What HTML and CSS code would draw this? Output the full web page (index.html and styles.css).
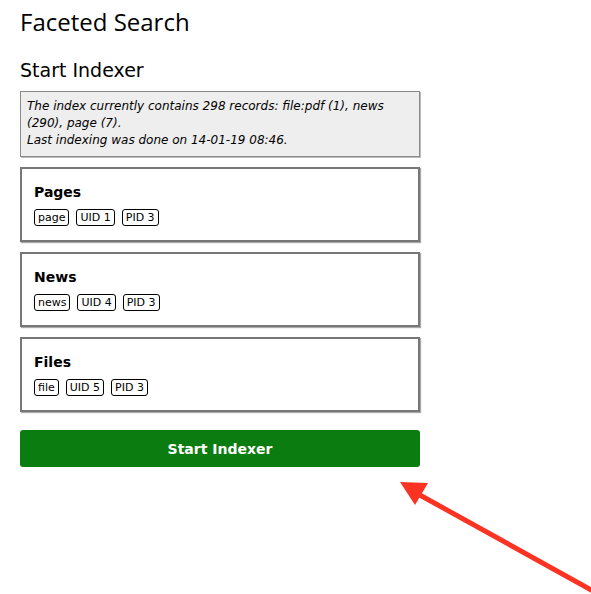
FILE: index.html
```html
<!DOCTYPE html>
<html>
<head>
<meta charset="utf-8">
<link rel="stylesheet" href="styles.css">
</head>
<body>
<div class="page">
  <h1 class="title">Faceted Search</h1>
  <h2 class="subtitle">Start Indexer</h2>
  <div class="info">
    <em>The index currently contains 298 records: file:pdf (1), news (290), page (7).<br>Last indexing was done on 14-01-19 08:46.</em>
  </div>
  <div class="card">
    <div class="card-title">Pages</div>
    <div class="tags"><span class="tag">page</span><span class="tag">UID 1</span><span class="tag">PID 3</span></div>
  </div>
  <div class="card">
    <div class="card-title">News</div>
    <div class="tags"><span class="tag">news</span><span class="tag">UID 4</span><span class="tag">PID 3</span></div>
  </div>
  <div class="card">
    <div class="card-title">Files</div>
    <div class="tags"><span class="tag">file</span><span class="tag">UID 5</span><span class="tag">PID 3</span></div>
  </div>
  <button class="btn">Start Indexer</button>
</div>
<svg class="arrow" width="591" height="594" viewBox="0 0 591 594">
  <line x1="418" y1="494" x2="595" y2="592" stroke="#fb3322" stroke-width="5"/>
  <polygon points="400,482 428,483 415,505" fill="#fb3322"/>
</svg>
</body>
</html>
```
FILE: styles.css
```css
html, body { margin: 0; padding: 0; background: #fff; }
body { font-family: "DejaVu Sans", Verdana, sans-serif; color: #000; }
.page { width: 400px; padding: 8px 20px 0 20px; }
.title { font-family: "Open Sans", sans-serif; font-weight: 400; font-size: 24px; line-height: 28px; margin: 0 0 22px 0; }
.subtitle { font-family: "DejaVu Sans", sans-serif; font-weight: 400; font-size: 19px; line-height: 24px; margin: 0 0 9px 0; }
.info { background: #eeeeee; border: 1px solid #8a8a8a; box-shadow: 1px 1px 0 #bbb; padding: 6px 6px 7px 6px; font-size: 12px; line-height: 17px; margin-bottom: 10px; }
.card { border: 2px solid #777; box-shadow: 1px 1px 1px #aaa; padding: 14px 12px 12px 12px; margin-bottom: 10px; height: 45px; }
.card-title { font-weight: 700; font-size: 14px; line-height: 18px; margin-bottom: 8px; }
.tags { display: flex; gap: 7px; }
.tag { border: 1px solid #000; border-radius: 3px; font-size: 11px; line-height: 15px; padding: 0 3px; }
.btn { display: block; width: 400px; height: 37px; margin-top: 18px; background: #0b7d10; color: #fff; border: 0; border-radius: 3px; font-family: "DejaVu Sans", sans-serif; font-weight: 700; font-size: 14px; }
.arrow { position: absolute; left: 0; top: 0; pointer-events: none; }
```
